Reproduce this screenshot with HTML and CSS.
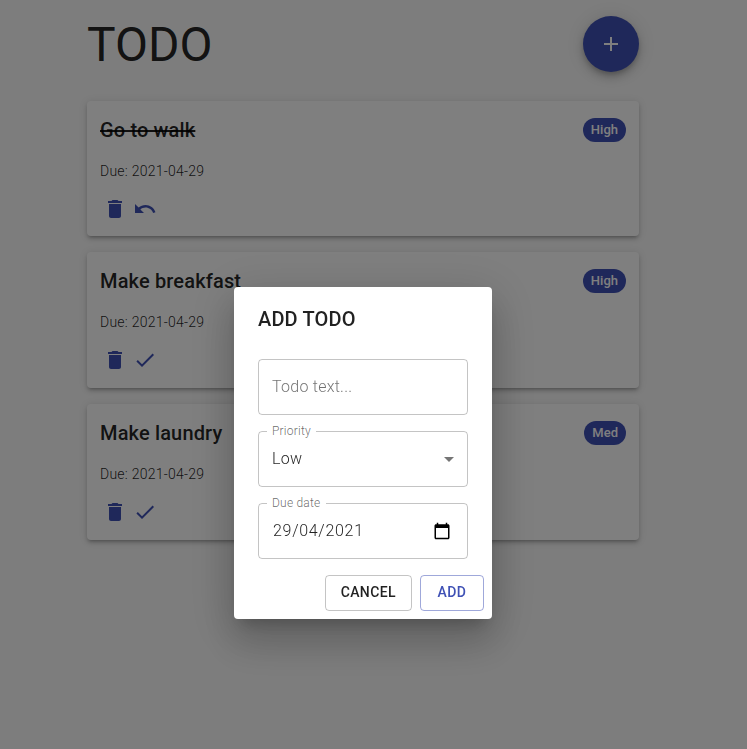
FILE: index.html
```
<!DOCTYPE html>
<html lang="en">
<head>
<meta charset="utf-8">
<title>TODO</title>
<link rel="stylesheet" href="styles.css">
</head>
<body>
<svg width="0" height="0" class="sprite" aria-hidden="true">
  <symbol id="add" viewBox="0 0 24 24"><path d="M19 13h-6v6h-2v-6H5v-2h6V5h2v6h6v2z"/></symbol>
  <symbol id="delete" viewBox="0 0 24 24"><path d="M6 19c0 1.1.9 2 2 2h8c1.1 0 2-.9 2-2V7H6v12zM19 4h-3.5l-1-1h-5l-1 1H5v2h14V4z"/></symbol>
  <symbol id="undo" viewBox="0 0 24 24"><path d="M12.5 8c-2.65 0-5.05.99-6.9 2.6L2 7v9h9l-3.62-3.62c1.39-1.16 3.16-1.88 5.12-1.88 3.54 0 6.55 2.31 7.6 5.5l2.37-.78C21.08 11.03 17.15 8 12.5 8z"/></symbol>
  <symbol id="check" viewBox="0 0 24 24"><path d="M9 16.17L4.83 12l-1.42 1.41L9 19 21 7l-1.41-1.41z"/></symbol>
</svg>
<main class="container">
  <header class="header">
    <h1>TODO</h1>
    <button class="fab" aria-label="Add"><svg class="icon"><use href="#add"/></svg></button>
  </header>
  <section class="list">
    <article class="card">
      <div class="card-head"><h2 class="done">Go to walk</h2><span class="chip">High</span></div>
      <p>Due: 2021-04-29</p>
      <div class="tools"><svg class="icon"><use href="#delete"/></svg><svg class="icon"><use href="#undo"/></svg></div>
    </article>
    <article class="card">
      <div class="card-head"><h2>Make breakfast</h2><span class="chip">High</span></div>
      <p>Due: 2021-04-29</p>
      <div class="tools"><svg class="icon"><use href="#delete"/></svg><svg class="icon"><use href="#check"/></svg></div>
    </article>
    <article class="card">
      <div class="card-head"><h2>Make laundry</h2><span class="chip">Med</span></div>
      <p>Due: 2021-04-29</p>
      <div class="tools"><svg class="icon"><use href="#delete"/></svg><svg class="icon"><use href="#check"/></svg></div>
    </article>
  </section>
</main>
<div class="backdrop">
  <div class="dialog" role="dialog">
    <h2 class="dialog-title">ADD TODO</h2>
    <div class="fields">
      <div class="field"><span class="placeholder">Todo text...</span></div>
      <div class="field">
        <label>Priority</label><span>Low</span>
        <svg class="icon arrow" viewBox="0 0 24 24"><path d="M7 10l5 5 5-5z"/></svg>
      </div>
      <div class="field">
        <label>Due date</label><span class="date">29/04/2021</span>
        <svg class="calendar" viewBox="0 0 24 24"><path d="M20 3h-1V1h-2v2H7V1H5v2H4c-1.1 0-2 .9-2 2v16c0 1.1.9 2 2 2h16c1.1 0 2-.9 2-2V5c0-1.1-.9-2-2-2zm0 18H4V8h16v13z"/></svg>
      </div>
    </div>
    <div class="actions"><button class="btn">CANCEL</button><button class="btn primary">ADD</button></div>
  </div>
</div>
</body>
</html>
```
FILE: styles.css
```
* { box-sizing: border-box; }
html, body { height: 100%; overflow: hidden; }
body {
  margin: 0;
  background: #fafafa;
  color: rgba(0, 0, 0, .87);
  font-family: Roboto, "Liberation Sans", sans-serif;
}
h1, h2, p { margin: 0; }
.sprite { position: absolute; }
.icon { width: 24px; height: 24px; fill: currentColor; flex: none; display: block; }
.container { width: 552px; margin-left: 87px; padding-top: 16px; }
.header { display: flex; justify-content: space-between; align-items: center; height: 56px; }
h1 { font-size: 48px; font-weight: 400; line-height: 56px; padding-top: 2px; }
.fab {
  width: 56px; height: 56px; padding: 0; border: 0; border-radius: 50%;
  display: flex; align-items: center; justify-content: center;
  color: #fff; background: #3f51b5;
  box-shadow: 0 3px 5px -1px rgba(0,0,0,.2), 0 6px 10px 0 rgba(0,0,0,.14), 0 1px 18px 0 rgba(0,0,0,.12);
}
.list { display: flex; flex-direction: column; gap: 16px; margin-top: 28.7px; }
.card {
  height: 135.7px; padding: 13px; border-radius: 4px; background: #fff;
  box-shadow: 0 3px 3px -2px rgba(0,0,0,.2), 0 3px 4px 0 rgba(0,0,0,.14), 0 1px 8px 0 rgba(0,0,0,.12);
}
.card-head { display: flex; justify-content: space-between; align-items: center; height: 32px; }
.card h2, .dialog-title { font-size: 20px; font-weight: 500; line-height: 32px; letter-spacing: .15px; }
.card .done { text-decoration: line-through; }
.card p { margin-top: 15px; font-size: 14px; font-weight: 300; line-height: 20px; letter-spacing: .24px; }
.chip {
  height: 24px; padding: 0 8px; border-radius: 12px; background: #3f51b5; color: #fff;
  font-size: 13px; font-weight: 500; line-height: 24px;
}
.tools { display: flex; gap: 6px; margin-top: 16px; padding-left: 3px; color: #3f51b5; }
.backdrop {
  position: fixed; inset: 0; padding: 287px 0 0 234px;
  background: rgba(0, 0, 0, .5);
}
.dialog {
  width: 258px; height: 332px; border-radius: 4px; background: #fff;
  box-shadow: 0 11px 15px -7px rgba(0,0,0,.2), 0 24px 38px 3px rgba(0,0,0,.14), 0 9px 46px 8px rgba(0,0,0,.12);
}
.dialog-title { padding: 16px 24px; }
.fields { display: flex; flex-direction: column; gap: 16px; padding: 8px 24px; }
.field {
  position: relative; display: flex; align-items: center; justify-content: space-between;
  height: 56px; padding: 0 13px; border: 1px solid rgba(0, 0, 0, .23); border-radius: 4px;
  font-size: 16px; font-weight: 300; line-height: 19px; letter-spacing: .25px;
}
.field span { padding-bottom: 2px; }
.field label {
  position: absolute; left: 8px; top: -8px; padding: 0 5px; background: #fff;
  font-size: 12px; line-height: 14px; letter-spacing: .22px; color: rgba(0, 0, 0, .6);
}
.placeholder { color: rgba(0, 0, 0, .56); }
.arrow { color: rgba(0, 0, 0, .54); margin-right: -7px; }
.date { letter-spacing: .7px; padding-left: 1px; }
.calendar { width: 18px; height: 18px; margin-right: 3px; }
.actions { display: flex; justify-content: flex-end; gap: 8px; padding: 8px; }
.btn {
  height: 36px; min-width: 64px; padding: 0 15px 2px; border: 1px solid rgba(0, 0, 0, .23); border-radius: 4px;
  background: transparent; color: rgba(0, 0, 0, .87);
  font: 500 14px/24px Roboto, sans-serif; letter-spacing: .4px;
}
.btn.primary { color: #3f51b5; border-color: rgba(63, 81, 181, .5); }
```
